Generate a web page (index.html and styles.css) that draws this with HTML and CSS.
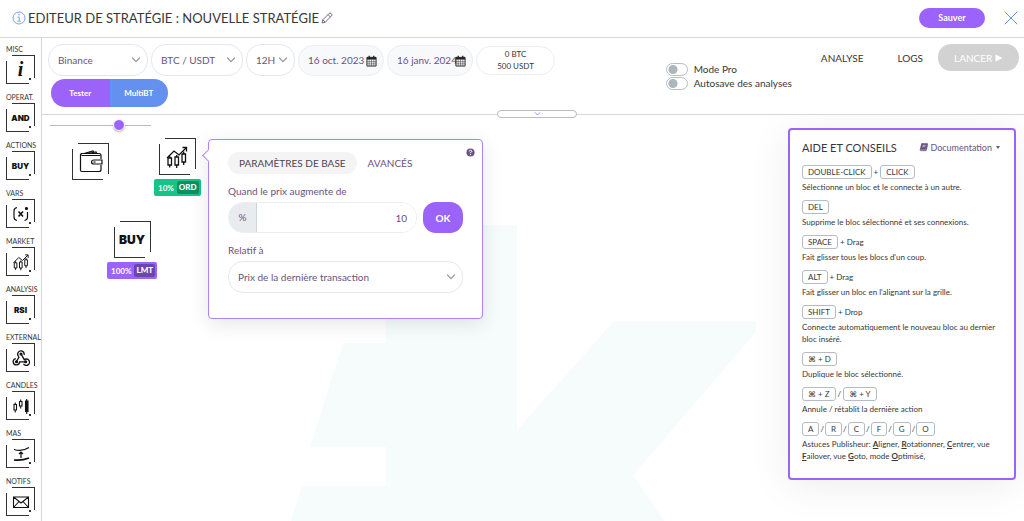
FILE: index.html
```html
<!DOCTYPE html>
<html lang="fr">

<head>
    <meta charset="UTF-8">
    <meta name="viewport" content="width=device-width, initial-scale=1.0">
    <title>Editeur de stratégie</title>
    <link rel="stylesheet" href="styles.css">
</head>

<body>
    <!-- Shared icons -->
    <svg class="sprite" aria-hidden="true">
        <symbol id="icon-chevron" viewBox="0 0 10 6">
            <path d="M1.5 1L5 4.6 8.5 1" fill="none" stroke="currentColor" stroke-width="1.2" stroke-linecap="round" />
        </symbol>
        <symbol id="icon-calendar" viewBox="0 0 12 12">
            <path d="M1 2h10v9.5H1z" fill="none" stroke="currentColor" />
            <path d="M1 2h10v2.4H1z" fill="currentColor" />
            <path d="M3.5 .3v2.4M8.5 .3v2.4" stroke="currentColor" stroke-width="1.4" />
            <path d="M1 6.8h10M1 9.1h10M3.5 4v7.5M6 4v7.5M8.5 4v7.5" stroke="currentColor" stroke-width=".5" />
        </symbol>
        <symbol id="icon-market" viewBox="0 0 24 24">
            <g fill="none" stroke="currentColor" stroke-width="1.3">
                <path d="M2 13L9 6l5 4 7-7" />
                <path d="M17.5 2.5H21.5V6.5" />
                <path d="M3 13h3.5v7H3zM10 12h3.5v8H10zM17 9h3.5v8H17z" />
                <path d="M4.7 11v2M4.7 20v2.5M11.7 10v2M11.7 20v3M18.7 6.5V9M18.7 17v3" />
            </g>
        </symbol>
    </svg>

    <header class="header">
        <svg class="icon-info" viewBox="0 0 14 14">
            <circle cx="7" cy="7" r="6" fill="none" stroke="currentColor" />
            <path d="M5.6 6H7.2V10M5.5 10.2h3.2" fill="none" stroke="currentColor" />
            <circle cx="7" cy="3.8" r=".8" fill="currentColor" />
        </svg>
        <h1>EDITEUR DE STRATÉGIE : NOUVELLE STRATÉGIE</h1>
        <button class="icon-btn edit-btn" aria-label="Renommer">
            <svg viewBox="0 0 12 12">
                <path d="M1 11l.8-3.2L8.2 1.4q.9-.8 1.8 0l.6.6q.8.9 0 1.8L4.2 10.2zM7 2.6L9.4 5M1.8 7.8l2.4 2.4"
                    fill="none" stroke="currentColor" stroke-width=".9" stroke-linejoin="round" />
            </svg>
        </button>
        <button class="save-btn">Sauver</button>
        <button class="icon-btn close-btn" aria-label="Fermer">
            <svg viewBox="0 0 14 14">
                <path d="M.7 .7l12.6 12.6M13.3 .7L.7 13.3" stroke="currentColor" />
            </svg>
        </button>
    </header>

    <div class="workspace">
        <!-- Block palette -->
        <nav class="palette">
            <div class="palette-item">
                <span>MISC</span>
                <button class="block has-menu"><i>i</i></button>
            </div>
            <div class="palette-item">
                <span>OPERAT.</span>
                <button class="block has-menu">AND</button>
            </div>
            <div class="palette-item">
                <span>ACTIONS</span>
                <button class="block has-menu">BUY</button>
            </div>
            <div class="palette-item">
                <span>VARS</span>
                <button class="block has-menu" aria-label="Variables">
                    <svg viewBox="0 0 18 18" fill="none" stroke="currentColor" stroke-width="1.2">
                        <path d="M5 2.5Q2 3 2 6v6q0 3 3 3.5" />
                        <path d="M15.5 7v5q0 3-3 3.5" />
                        <path d="M6.5 6.5l4.5 5M11 6.5l-4.5 5" stroke-width="1.6" />
                        <circle cx="14.5" cy="3.5" r="1" fill="currentColor" />
                    </svg>
                </button>
            </div>
            <div class="palette-item">
                <span>MARKET</span>
                <button class="block has-menu" aria-label="Market"><svg><use href="#icon-market" /></svg></button>
            </div>
            <div class="palette-item">
                <span>ANALYSIS</span>
                <button class="block has-menu">RSI</button>
            </div>
            <div class="palette-item">
                <span>EXTERNAL</span>
                <button class="block" aria-label="External">
                    <svg viewBox="0 0 18 18" fill="none" stroke="currentColor" stroke-width="1.3">
                        <path d="M6.8 7.5a3.2 3.2 0 1 1 5.2-1.5M9 5l3.3 5.7a3.2 3.2 0 1 1-.8 4M13.5 12.8H7.6a3.2 3.2 0 1 1-3.8-3.2M4.5 12.5L7.2 7.6" />
                        <g fill="currentColor">
                            <circle cx="9" cy="5" r=".9" />
                            <circle cx="4.5" cy="12.7" r=".9" />
                            <circle cx="13.7" cy="12.8" r=".9" />
                        </g>
                    </svg>
                </button>
            </div>
            <div class="palette-item">
                <span>CANDLES</span>
                <button class="block has-menu" aria-label="Candles">
                    <svg viewBox="0 0 18 18" fill="none" stroke="currentColor" stroke-width="1.1">
                        <path d="M2 7.5h2.5v5.5H2zM3.2 5.5v2M3.2 13v2.5" />
                        <path d="M7.5 4.5H10V9H7.5zM8.7 2.5v2M8.7 9v2.5" />
                        <path d="M13.5 4H16v10.5h-2.5zM14.7 2v2M14.7 14v3" fill="currentColor" />
                    </svg>
                </button>
            </div>
            <div class="palette-item">
                <span>MAS</span>
                <button class="block has-menu" aria-label="Moving averages">
                    <svg viewBox="0 0 18 18" fill="none" stroke="currentColor" stroke-width="1.2">
                        <path d="M2 4.5q8 2.5 15-2" />
                        <path d="M2 15q8 .8 15-2" stroke-width="1.7" />
                        <path d="M9 13V7M7 9l2-2 2 2" />
                    </svg>
                </button>
            </div>
            <div class="palette-item">
                <span>NOTIFS</span>
                <button class="block has-menu" aria-label="Notifications">
                    <svg viewBox="0 0 18 18" fill="none" stroke="currentColor" stroke-width="1.1">
                        <path d="M1.5 4h15v10.5h-15zM1.5 4L9 10l7.5-6M1.5 14.5l5.5-6M16.5 14.5l-5.5-6" />
                    </svg>
                </button>
            </div>
        </nav>

        <main class="main">
            <div class="toolbar">
                <div class="settings">
                    <div class="select-wrap exchange">
                        <select aria-label="Exchange"><option>Binance</option></select>
                        <svg class="chevron"><use href="#icon-chevron" /></svg>
                    </div>
                    <div class="select-wrap pair">
                        <select aria-label="Paire"><option>BTC / USDT</option></select>
                        <svg class="chevron"><use href="#icon-chevron" /></svg>
                    </div>
                    <div class="select-wrap interval">
                        <select aria-label="Intervalle"><option>12H</option></select>
                        <svg class="chevron"><use href="#icon-chevron" /></svg>
                    </div>
                    <div class="date-wrap">
                        <input type="text" value="16 oct. 2023" aria-label="Date de début">
                        <svg><use href="#icon-calendar" /></svg>
                    </div>
                    <div class="date-wrap">
                        <input type="text" value="16 janv. 2024" aria-label="Date de fin">
                        <svg><use href="#icon-calendar" /></svg>
                    </div>
                    <button class="wallet-btn">0 BTC<br>500 USDT</button>
                    <div class="mode-group">
                        <button class="mode-test">Tester</button>
                        <button class="mode-multi">MultiBT</button>
                    </div>
                </div>

                <div class="switches">
                    <label><input type="checkbox" class="switch">Mode Pro</label>
                    <label><input type="checkbox" class="switch">Autosave des analyses</label>
                </div>

                <div class="actions">
                    <a href="#">ANALYSE</a>
                    <a href="#">LOGS</a>
                    <button class="run-btn" disabled>LANCER
                        <svg viewBox="0 0 8 8"><path d="M.5 .5l7 3.5-7 3.5z" fill="currentColor" /></svg>
                    </button>
                </div>

                <button class="drawer-handle" aria-label="Ouvrir le panneau">
                    <svg class="chevron"><use href="#icon-chevron" /></svg>
                </button>
            </div>

            <div class="canvas">
                <svg class="watermark" viewBox="0 0 466 340">
                    <path d="M95 0h131v205l97-109h142v11L342 250l61 90H-14L11 261h84v-39H19L52 118h43z" />
                </svg>

                <input class="zoom" type="range" min="0" max="100" value="71" aria-label="Zoom">

                <!-- Strategy blocks -->
                <div class="node node-wallet">
                    <div class="block">
                        <svg viewBox="0 0 24 24" fill="none" stroke="currentColor" stroke-width="1.2">
                            <path d="M2.5 5Q1 4 2.5 3.5H20q2 0 2 2V9M1.5 4v16q0 1.5 1.5 1.5h17q2 0 2-2V15" />
                            <path d="M2.5 5.5h19M5 3.5L14 1l1.5 2.5M9 3.5L17 2l.8 1.5" />
                            <path d="M23 10h-8q-2.5 0-2.5 2t2.5 2h8z" />
                            <path d="M14.5 12h2" />
                        </svg>
                    </div>
                </div>
                <div class="node node-market">
                    <div class="block"><svg><use href="#icon-market" /></svg></div>
                    <div class="badge green">10% <b>ORD</b></div>
                </div>
                <div class="node node-buy">
                    <div class="block">BUY</div>
                    <div class="badge purple">100% <b>LMT</b></div>
                </div>

                <!-- Block settings -->
                <section class="popover">
                    <button class="icon-btn help-btn" aria-label="Aide">
                        <svg viewBox="0 0 10 10">
                            <circle cx="5" cy="5" r="4.5" fill="currentColor" />
                            <path d="M3.5 3.9Q3.6 2.5 5 2.5t1.5 1.2Q6.5 4.6 5 5v.8" fill="none" stroke="#fff" stroke-width="1.1" />
                            <circle cx="5" cy="7.3" r=".7" fill="#fff" />
                        </svg>
                    </button>
                    <div class="tabs">
                        <button class="active">PARAMÈTRES DE BASE</button>
                        <button>AVANCÉS</button>
                    </div>
                    <label for="rise">Quand le prix augmente de</label>
                    <div class="amount-row">
                        <div class="input-group">
                            <span>%</span>
                            <input id="rise" type="text" value="10">
                        </div>
                        <button class="ok-btn">OK</button>
                    </div>
                    <label for="relative">Relatif à</label>
                    <div class="select-wrap">
                        <select id="relative"><option>Prix de la dernière transaction</option></select>
                        <svg class="chevron"><use href="#icon-chevron" /></svg>
                    </div>
                </section>

                <!-- Shortcuts -->
                <aside class="help">
                    <div class="help-head">
                        <h2>AIDE ET CONSEILS</h2>
                        <button class="doc-btn">
                            <svg viewBox="0 0 10 10">
                                <path d="M2.5 .8H9.5L7.7 7H2q-1 0-.8.8t1 .7h5.6L9.3 3" fill="none" stroke="currentColor" />
                                <path d="M2.5 .8H9.5L7.7 7H1z" fill="currentColor" />
                                <path d="M4 2.6h3.5M3.6 4.2h3.5" stroke="#fff" stroke-width=".6" />
                            </svg>
                            Documentation
                        </button>
                    </div>
                    <dl>
                        <dt><kbd>DOUBLE-CLICK</kbd> + <kbd>CLICK</kbd></dt>
                        <dd>Sélectionne un bloc et le connecte à un autre.</dd>
                        <dt><kbd>DEL</kbd></dt>
                        <dd>Supprime le bloc sélectionné et ses connexions.</dd>
                        <dt><kbd>SPACE</kbd> + Drag</dt>
                        <dd>Fait glisser tous les blocs d'un coup.</dd>
                        <dt><kbd>ALT</kbd> + Drag</dt>
                        <dd>Fait glisser un bloc en l'alignant sur la grille.</dd>
                        <dt><kbd>SHIFT</kbd> + Drop</dt>
                        <dd>Connecte automatiquement le nouveau bloc au dernier bloc inséré.</dd>
                        <dt><kbd>⌘ + D</kbd></dt>
                        <dd>Duplique le bloc sélectionné.</dd>
                        <dt><kbd>⌘ + Z</kbd> / <kbd>⌘ + Y</kbd></dt>
                        <dd>Annule / rétablit la dernière action</dd>
                        <dt class="letters"><kbd>A</kbd> / <kbd>R</kbd> / <kbd>C</kbd> / <kbd>F</kbd> / <kbd>G</kbd> / <kbd>O</kbd></dt>
                        <dd>Astuces Publisheur: <u>A</u>ligner, <u>R</u>otationner, <u>C</u>entrer, vue
                            <u>F</u>ailover, vue <u>G</u>oto, mode <u>O</u>ptimisé,</dd>
                    </dl>
                </aside>
            </div>
        </main>
    </div>
</body>

</html>
```
FILE: styles.css
```css
* {
    box-sizing: border-box;
}

body {
    margin: 0;
    height: 100vh;
    display: flex;
    flex-direction: column;
    overflow: hidden;
    background: #fff;
    color: #373737;
    font-family: Lato, sans-serif;
    font-size: 10px;
}

button,
input,
select {
    margin: 0;
    font: inherit;
    color: inherit;
}

button {
    padding: 0;
    border: 0;
    background: none;
    cursor: pointer;
}

a {
    color: inherit;
    text-decoration: none;
}

.sprite {
    position: absolute;
    width: 0;
    height: 0;
}

.icon-btn svg {
    display: block;
    width: 100%;
    height: 100%;
}

/* Header */
.header {
    flex: none;
    display: flex;
    align-items: center;
    height: 38px;
    padding: 0 6px 2px 12px;
    border-bottom: 1px solid #d5d5e2;
}

.icon-info {
    width: 14px;
    height: 14px;
    margin-right: 2px;
    color: #7f9ff5;
}

h1 {
    margin: 0;
    font-size: 13px;
    font-weight: 400;
}

.edit-btn {
    width: 12px;
    height: 12px;
    margin-left: 2px;
    color: #6b5280;
}

.save-btn {
    width: 66px;
    height: 20px;
    margin-left: auto;
    border-radius: 10px;
    background: #9c63fa;
    color: #fff;
    font-size: 9px;
    font-weight: 700;
}

.close-btn {
    width: 14px;
    height: 14px;
    margin-left: 19px;
    color: #6490f0;
}

/* Palette */
.workspace {
    flex: 1;
    display: flex;
    min-height: 0;
}

.palette {
    flex: none;
    width: 42px;
    padding: 5px 0 0 6px;
    border-right: 1px solid #d5d5e2;
    overflow: hidden;
}

.palette-item {
    height: 48px;
}

.palette-item span {
    display: block;
    height: 12px;
    line-height: 13px;
    font-size: 7px;
    white-space: nowrap;
}

/* Square with two open corners */
.block {
    position: relative;
    display: flex;
    align-items: center;
    justify-content: center;
    width: 29px;
    height: 29px;
    color: #111;
    font-family: Inter, sans-serif;
    font-size: 8px;
    font-weight: 900;
}

.block::before,
.block::after {
    content: "";
    position: absolute;
    border: 0 solid #333;
}

.block::before {
    inset: 0 0 6px 6px;
    border-width: 1px 1px 0 0;
}

.block::after {
    inset: 6px 6px 0 0;
    border-width: 0 0 1px 1px;
}

.block svg {
    width: 18px;
    height: 18px;
}

.block i {
    font-family: "Liberation Serif", serif;
    font-size: 20px;
}

.has-menu {
    background: linear-gradient(#333, #333) 23px 23px / 2px 2px no-repeat;
}

/* Toolbar */
.main {
    flex: 1;
    display: flex;
    flex-direction: column;
    min-width: 0;
}

.toolbar {
    flex: none;
    position: relative;
    display: flex;
    align-items: flex-start;
    padding: 6px 5px 7px 6px;
    border-bottom: 1px solid #d5d5e2;
}

.settings {
    flex: 0 1 520px;
    display: flex;
    flex-wrap: wrap;
    align-items: center;
    gap: 3px;
}

.select-wrap {
    position: relative;
    color: #6b5280;
}

.select-wrap select {
    display: block;
    width: 100%;
    height: 32px;
    padding: 0 16px 0 9px;
    border: 1px solid #e4e7ee;
    border-radius: 15px;
    background: #fff;
    appearance: none;
}

.select-wrap .chevron {
    position: absolute;
    top: 13px;
    right: 7px;
    width: 10px;
    height: 6px;
    color: #999;
    pointer-events: none;
}

.exchange {
    width: 100px;
}

.pair {
    width: 92px;
}

.interval {
    width: 49px;
}

.date-wrap {
    position: relative;
    width: 86px;
    color: #6b5280;
}

.date-wrap input {
    display: block;
    width: 100%;
    height: 31px;
    padding: 0 0 0 9px;
    border: 1px solid #eceef2;
    border-radius: 15px;
    background: #f8f9fb;
}

.date-wrap svg {
    position: absolute;
    top: 10px;
    right: 7px;
    width: 11px;
    height: 12px;
    color: #222;
}

.wallet-btn {
    width: 79px;
    height: 29px;
    border: 1px solid #eceef2;
    border-radius: 15px;
    font-size: 8px;
    line-height: 12px;
}

.mode-group {
    display: flex;
    width: 117px;
    height: 28px;
    margin-left: 3px;
    border-radius: 14px;
    overflow: hidden;
    color: #fff;
    font-size: 8px;
    font-weight: 700;
}

.mode-group button {
    flex: 1;
}

.mode-test {
    background: #9c63fa;
}

.mode-multi {
    background: #6490f0;
}

.switches {
    margin: 18px 0 0 auto;
}

.switches label {
    display: flex;
    align-items: center;
    gap: 6px;
    height: 14px;
    white-space: nowrap;
}

.switch {
    width: 22px;
    height: 13px;
    border: 1px solid #b4bcc6;
    border-radius: 7px;
    background: #fff radial-gradient(circle at 6px 50%, #adb5bd 4px, transparent 5px);
    appearance: none;
}

.actions {
    display: flex;
    align-items: center;
    margin-left: 29px;
}

.actions a {
    margin-right: 34px;
}

.actions a + a {
    margin-right: 15px;
}

.run-btn {
    width: 81px;
    height: 27px;
    border-radius: 13px;
    background: #d2d2d2;
    color: #fff;
}

.run-btn svg {
    width: 8px;
    height: 8px;
}

.drawer-handle {
    position: absolute;
    z-index: 1;
    left: 50%;
    bottom: -4px;
    display: flex;
    align-items: center;
    justify-content: center;
    width: 80px;
    height: 8px;
    margin-left: -36px;
    border: 1px solid #b4bcc6;
    border-radius: 4px;
    background: #fff;
    color: #9c63fa;
}

.drawer-handle svg {
    width: 7px;
    height: 4px;
}

/* Canvas */
.canvas {
    flex: 1;
    position: relative;
    overflow: hidden;
}

.watermark {
    position: absolute;
    top: 110px;
    left: 249px;
    width: 466px;
    height: 340px;
    overflow: visible;
    fill: #f5fcfb;
}

.zoom {
    display: block;
    width: 101px;
    height: 14px;
    margin: 3px 0 0 8px;
    background: linear-gradient(#b4bcc6, #b4bcc6) center / 100% 1px no-repeat;
    appearance: none;
}

.zoom::-webkit-slider-thumb {
    width: 12px;
    height: 12px;
    border: 1px solid #fff;
    border-radius: 50%;
    background: #9c63fa;
    box-shadow: 0 1px 2px rgba(0, 0, 0, 0.3);
    appearance: none;
}

.node {
    position: absolute;
    display: flex;
    flex-direction: column;
    align-items: center;
    gap: 4px;
}

.node .block {
    width: 37px;
    height: 37px;
    font-size: 12px;
}

.node .block svg {
    width: 24px;
    height: 24px;
}

.node-wallet {
    left: 30px;
    top: 28px;
}

.node-market {
    left: 112px;
    top: 23px;
}

.node-buy {
    left: 65px;
    top: 106px;
}

.badge {
    display: flex;
    align-items: center;
    gap: 3px;
    height: 17px;
    padding: 0 2px 0 4px;
    border-radius: 2px;
    color: #fff;
    font-size: 8px;
    font-weight: 700;
}

.badge b {
    padding: 0 2px;
    border-radius: 2px;
    line-height: 13px;
}

.green {
    background: #15c486;
}

.green b {
    background: #118e60;
}

.purple {
    background: #9c63fa;
}

.purple b {
    background: #6c46ae;
}

/* Block settings */
.popover {
    position: absolute;
    top: 24px;
    left: 166px;
    width: 275px;
    padding: 12px 19px 25px;
    border: 1px solid #ae82fb;
    border-radius: 4px;
    background: #fff;
    box-shadow: 0 5px 20px rgba(0, 0, 0, 0.1);
    color: #6b5280;
}

.popover::before {
    content: "";
    position: absolute;
    top: 11px;
    left: -5px;
    width: 8px;
    height: 8px;
    border: solid #ae82fb;
    border-width: 0 0 1px 1px;
    background: #fff;
    transform: rotate(45deg);
}

.help-btn {
    position: absolute;
    top: 8px;
    right: 7px;
    width: 9px;
    height: 9px;
}

.tabs {
    display: flex;
    margin-bottom: 10px;
}

.tabs button {
    height: 22px;
    padding: 0 11px;
    border-radius: 11px;
}

.tabs .active {
    background: #f4f4f5;
    color: #4b4453;
}

.popover label {
    display: block;
    height: 18px;
    line-height: 14px;
}

.amount-row {
    display: flex;
    gap: 6px;
    margin-bottom: 10px;
}

.input-group {
    flex: 1;
    display: flex;
    min-width: 0;
    height: 31px;
    border: 1px solid #eceef2;
    border-radius: 15px;
    overflow: hidden;
}

.input-group span {
    width: 28px;
    border-right: 1px solid #cfd5dc;
    background: #e9ecef;
    line-height: 29px;
    text-align: center;
}

.input-group input {
    flex: 1;
    min-width: 0;
    padding: 0 9px;
    border: 0;
    text-align: right;
}

.ok-btn {
    width: 40px;
    height: 31px;
    border-radius: 13px;
    background: #9c63fa;
    color: #fff;
    font-weight: 700;
}

/* Shortcuts */
.help {
    position: absolute;
    top: 13px;
    right: 8px;
    width: 228px;
    padding: 9px 12px 16px;
    border: 2px solid #9c63fa;
    border-radius: 4px;
    background: #fff;
    box-shadow: 0 5px 40px rgba(0, 0, 0, 0.08);
    font-size: 8px;
}

.help-head {
    display: flex;
    align-items: center;
    justify-content: space-between;
    height: 16px;
    margin-bottom: 9px;
}

h2 {
    margin: 0;
    font-size: 11px;
    font-weight: 400;
}

.doc-btn {
    display: flex;
    align-items: center;
    gap: 2px;
    color: #6b5280;
    font-size: 9px;
}

.doc-btn svg {
    width: 9px;
    height: 9px;
}

.doc-btn::after {
    content: "";
    margin: 0 2px;
    border: 2px solid transparent;
    border-top: 3px solid;
    border-bottom: 0;
}

dl {
    margin: 0;
}

dt {
    display: flex;
    align-items: center;
    gap: 2px;
    height: 15px;
    margin-bottom: 2px;
}

.letters {
    gap: 1px;
}

kbd {
    padding: 0 5px;
    border: 1px solid #b4bcc6;
    border-radius: 3px;
    font-family: Lato, "DejaVu Sans", sans-serif;
    line-height: 12px;
}

dd {
    margin: 0 0 6px;
    line-height: 12px;
}

dd:last-child {
    margin-bottom: 0;
}

u {
    font-weight: 700;
}
```
